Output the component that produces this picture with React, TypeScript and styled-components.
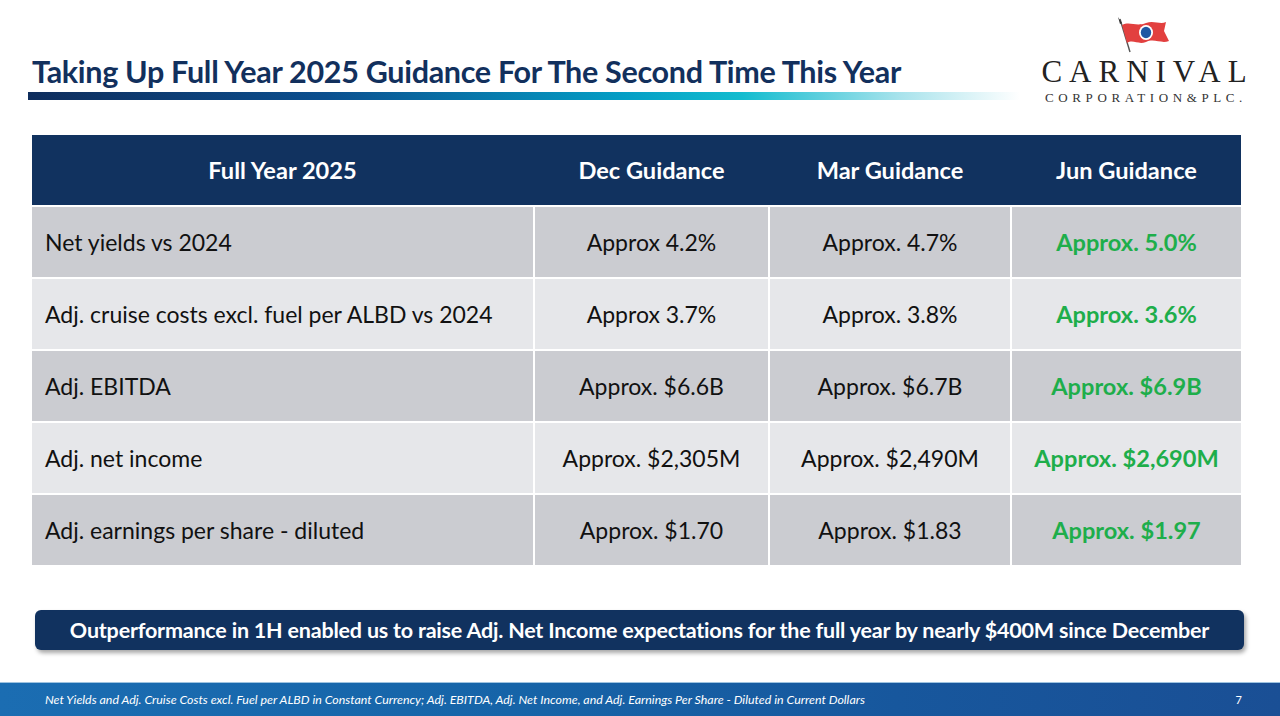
import styled, { createGlobalStyle } from "styled-components";

const GlobalStyle = createGlobalStyle`
    html, body {
        margin: 0;
        padding: 0;
        background: #ffffff;
    }
    body {
        font-family: Lato, "Open Sans", sans-serif;
    }
`;

const Page = styled.div`
    width: 1280px;
    height: 716px;
    display: flex;
    flex-direction: column;
    overflow: hidden;
    background: #ffffff;
`;

const Top = styled.header`
    display: flex;
    justify-content: space-between;
    align-items: flex-start;
    height: 110px;
`;

const TitleBlock = styled.div`
    padding: 52px 0 0 28px;
    width: 992px;
`;

const Title = styled.h1`
    margin: 0 0 0 4px;
    font-size: 30.5px;
    line-height: 38px;
    font-weight: 700;
    color: #12305d;
    letter-spacing: -0.3px;
`;

const GradientBar = styled.div`
    margin-top: 2px;
    height: 8px;
    background: linear-gradient(90deg, #0f2d5c 0%, #0b4f8f 30%, #049ec5 60%, #13bccf 72%, #a9e3ec 88%, #ffffff 100%);
`;

const Logo = styled.div`
    width: 200px;
    margin: 17px 36px 0 0;
    display: flex;
    flex-direction: column;
    align-items: center;
`;

const LogoWord = styled.div`
    font-family: "Liberation Serif", serif;
    font-size: 31px;
    line-height: normal;
    letter-spacing: 7px;
    margin-right: -7px;
    color: #222222;
    margin-top: 1px;
`;

const LogoSub = styled.div`
    font-family: "Liberation Serif", serif;
    font-size: 13px;
    line-height: normal;
    letter-spacing: 4.6px;
    margin-right: -4px;
    color: #333333;
`;

const Table = styled.div`
    margin: 25px 0 0 32px;
    width: 1209px;
    display: flex;
    flex-direction: column;
    gap: 2px;
`;

const Row = styled.div<{ $shade?: "head" | "dark" | "light" }>`
    display: grid;
    grid-template-columns: 501px 233px 240px 229px;
    column-gap: 2px;
    height: 70px;
    background: ${p => (p.$shade === "head" ? "#11325f" : "#ffffff")};
`;

const Cell = styled.div<{ $shade: "head" | "dark" | "light"; $first?: boolean; $green?: boolean }>`
    display: flex;
    align-items: center;
    justify-content: ${p => (p.$first && p.$shade !== "head" ? "flex-start" : "center")};
    padding: ${p => (p.$first && p.$shade !== "head" ? "0 0 0 13px" : "0")};
    background: ${p => (p.$shade === "head" ? "#11325f" : p.$shade === "dark" ? "#cbccd1" : "#e6e7ea")};
    color: ${p => (p.$shade === "head" ? "#ffffff" : p.$green ? "#1eae4b" : "#111111")};
    font-size: ${p => (p.$shade === "head" || p.$green ? "23.6px" : "23px")};
    font-weight: ${p => (p.$shade === "head" || p.$green ? 700 : 400)};
`;

const Callout = styled.div`
    margin: 45px 0 0 35px;
    width: 1209px;
    height: 40px;
    border-radius: 6px;
    background: #11325f;
    box-shadow: 2px 3px 4px rgba(0, 0, 0, 0.35);
    display: flex;
    align-items: center;
    justify-content: center;
    color: #ffffff;
    font-size: 21.5px;
    font-weight: 700;
    letter-spacing: -0.2px;
`;

const Spacer = styled.div`
    flex: 1;
`;

const Footer = styled.footer`
    height: 33px;
    display: flex;
    align-items: center;
    justify-content: space-between;
    padding: 0 38px 0 45px;
    background: linear-gradient(90deg, #1b6db2 0%, #1664a8 40%, #17579d 70%, #1a4f95 100%);
    border-top: 1px solid #9ec3e0;
    color: #ffffff;
`;

const FootNote = styled.span`
    font-size: 12.4px;
    font-style: italic;
`;

const PageNum = styled.span`
    font-size: 11px;
`;

type Shade = "dark" | "light";

const rows: { label: string; dec: string; mar: string; jun: string }[] = [
    { label: "Net yields vs 2024", dec: "Approx 4.2%", mar: "Approx. 4.7%", jun: "Approx. 5.0%" },
    { label: "Adj. cruise costs excl. fuel per ALBD vs 2024", dec: "Approx 3.7%", mar: "Approx. 3.8%", jun: "Approx. 3.6%" },
    { label: "Adj. EBITDA", dec: "Approx. $6.6B", mar: "Approx. $6.7B", jun: "Approx. $6.9B" },
    { label: "Adj. net income", dec: "Approx. $2,305M", mar: "Approx. $2,490M", jun: "Approx. $2,690M" },
    { label: "Adj. earnings per share - diluted", dec: "Approx. $1.70", mar: "Approx. $1.83", jun: "Approx. $1.97" },
];

function Flag() {
    return (
        <svg width="56" height="36" viewBox="0 0 56 36">
            <line x1="4" y1="2" x2="14" y2="35" stroke="#555" strokeWidth="1.4" />
            <path d="M2 0 L6 6 L4 7 Z" fill="#333" />
            <path d="M6 8 C14 4 20 10 30 6 C38 3 44 8 50 5 L48 14 L53 24 C45 27 38 21 30 25 C22 28 17 22 11 26 Z" fill="#e2403f" />
            <ellipse cx="30" cy="15.5" rx="7" ry="7.5" fill="#ffffff" />
            <ellipse cx="30" cy="15.5" rx="5.2" ry="5.8" fill="#1f57a3" />
        </svg>
    );
}

function App() {
    return (
        <Page>
            <GlobalStyle />
            <Top>
                <TitleBlock>
                    <Title>Taking Up Full Year 2025 Guidance For The Second Time This Year</Title>
                    <GradientBar />
                </TitleBlock>
                <Logo>
                    <Flag />
                    <LogoWord>CARNIVAL</LogoWord>
                    <LogoSub>CORPORATION&amp;PLC.</LogoSub>
                </Logo>
            </Top>
            <Table>
                <Row $shade="head">
                    <Cell $shade="head" $first>Full Year 2025</Cell>
                    <Cell $shade="head">Dec Guidance</Cell>
                    <Cell $shade="head">Mar Guidance</Cell>
                    <Cell $shade="head">Jun Guidance</Cell>
                </Row>
                {rows.map((r, i) => {
                    const shade: Shade = i % 2 === 0 ? "dark" : "light";
                    return (
                        <Row key={r.label}>
                            <Cell $shade={shade} $first>{r.label}</Cell>
                            <Cell $shade={shade}>{r.dec}</Cell>
                            <Cell $shade={shade}>{r.mar}</Cell>
                            <Cell $shade={shade} $green>{r.jun}</Cell>
                        </Row>
                    );
                })}
            </Table>
            <Callout>
                Outperformance in 1H enabled us to raise Adj. Net Income expectations for the full year by nearly $400M since December
            </Callout>
            <Spacer />
            <Footer>
                <FootNote>
                    Net Yields and Adj. Cruise Costs excl. Fuel per ALBD in Constant Currency; Adj. EBITDA, Adj. Net Income, and Adj. Earnings Per Share - Diluted in Current Dollars
                </FootNote>
                <PageNum>7</PageNum>
            </Footer>
        </Page>
    );
}

export default App;
